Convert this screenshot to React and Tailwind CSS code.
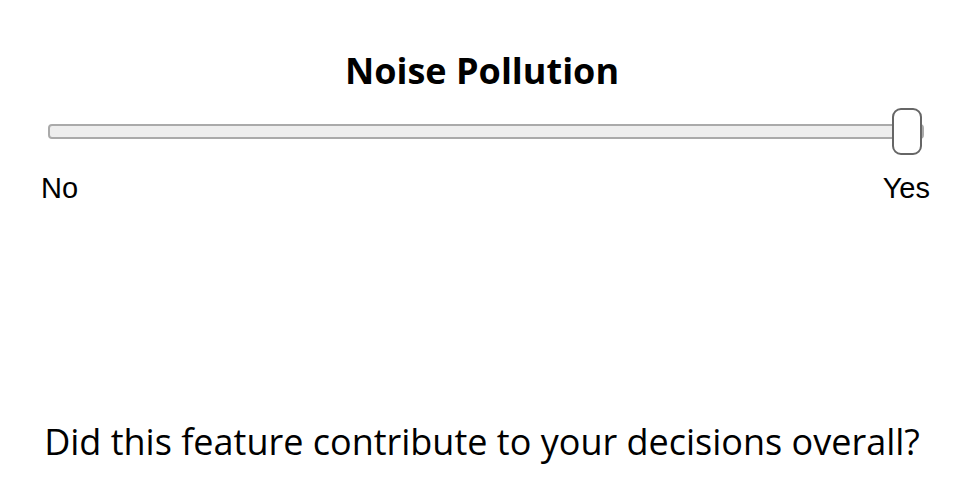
export default function App() {
	return (
		<div className="w-[968px] h-[496px] bg-white text-black flex flex-col items-center font-['Open_Sans',sans-serif]">
			<h2 className="mt-[53px] mr-[4px] text-[36px] leading-none font-bold">Noise Pollution</h2>

			{/* slider */}
			<div className="w-full pl-[41px] pr-[38px] mt-[19px]">
				<div className="relative h-[47px] ml-[7px] mr-[6px] flex items-center">
					<div className="w-full h-[15px] rounded-[4px] border-2 border-[#aaaaaa] bg-[#eeeeee]" />
					<div className="absolute right-[2px] top-0 w-[30px] h-[47px] rounded-[9px] border-2 border-[#666666] bg-white" />
				</div>
				<div className="flex justify-between mt-[19px] font-['Liberation_Sans',Arial,sans-serif] text-[29px] leading-none">
					<span>No</span>
					<span>Yes</span>
				</div>
			</div>

			<p className="mt-[221px] mr-[4px] text-[36px] leading-none">
				Did this feature contribute to your decisions overall?
			</p>
		</div>
	);
}
